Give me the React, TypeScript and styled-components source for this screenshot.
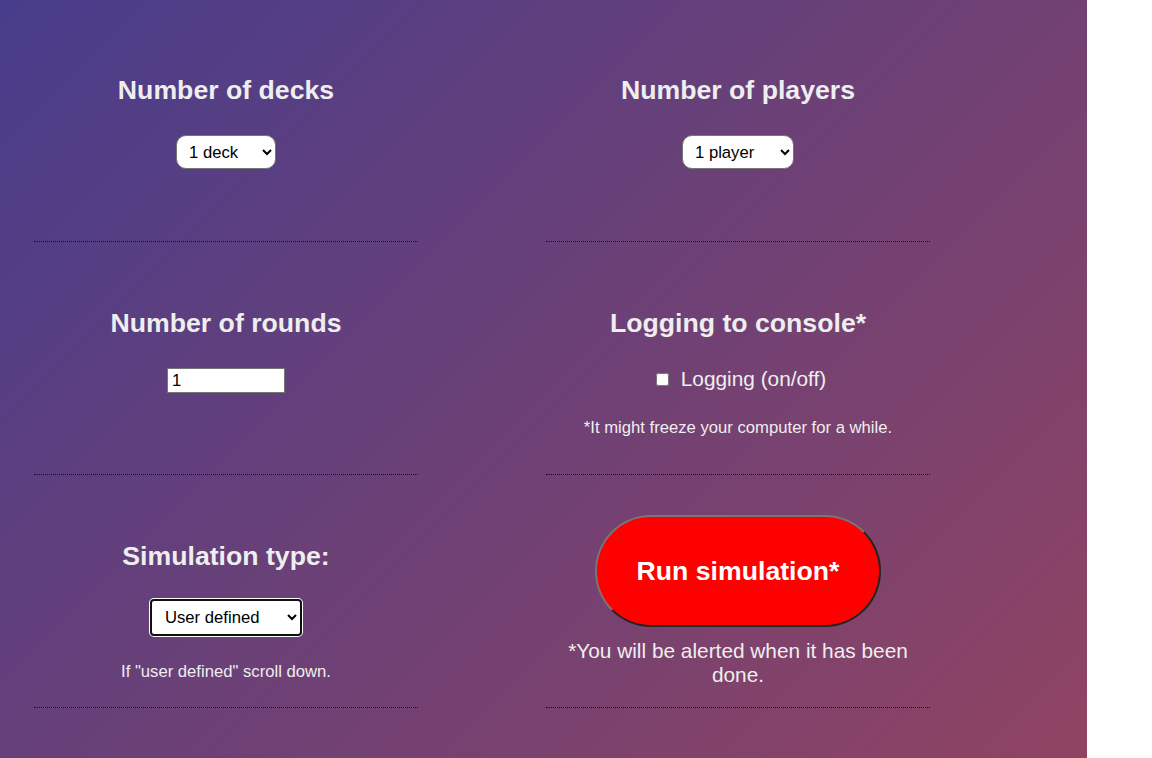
import React from 'react'
import styled, { createGlobalStyle } from 'styled-components'

const GlobalStyle = createGlobalStyle`
  html, body {
    margin: 0;
    padding: 0;
    background: #ffffff;
  }
  body {
    font-family: "Liberation Sans", Arial, sans-serif;
  }
`

const Page = styled.div`
  width: 1087px;
  min-height: 758px;
  background: linear-gradient(135deg, #483d8b 0%, #904462 100%);
  color: #eeeeee;
  overflow: hidden;
`

const Grid = styled.div`
  display: grid;
  grid-template-columns: 384px 384px;
  column-gap: 128px;
  padding: 9px 0 0 34px;
`

const Cell = styled.section<{ $top?: number }>`
  box-sizing: border-box;
  height: 233px;
  padding-top: ${(p) => p.$top ?? 66}px;
  border-bottom: 1px dotted #141014;
  display: flex;
  flex-direction: column;
  align-items: center;
  text-align: center;
`

const Heading = styled.h2`
  margin: 0 0 30px;
  font-size: 26.67px;
  line-height: 30px;
  font-weight: bold;
  color: #eeeeee;
`

const Select = styled.select<{ $w: number }>`
  width: ${(p) => p.$w}px;
  height: 34px;
  padding: 0 6px 0 8px;
  font-family: "Liberation Sans", Arial, sans-serif;
  font-size: 16.67px;
  color: #000;
  background: #fff;
  border: 1px solid #767676;
  border-radius: 10px;
`

const TypeSelect = styled.select`
  width: 152px;
  height: 37px;
  padding: 0 6px 0 9px;
  font-family: "Liberation Sans", Arial, sans-serif;
  font-size: 16.67px;
  color: #000;
  background: #fff;
  border: 2px solid #101010;
  border-radius: 4px;
  box-shadow: 0 0 0 1px #ffffff;
  margin-top: -2px;
`

const NumberInput = styled.input`
  width: 118px;
  height: 25px;
  box-sizing: border-box;
  padding: 0 4px;
  font-family: "Liberation Sans", Arial, sans-serif;
  font-size: 16.67px;
  color: #000;
  background: #fff;
  border: 1px solid #767676;
`

const CheckRow = styled.label`
  display: flex;
  align-items: center;
  gap: 12px;
  font-size: 20.83px;
  line-height: 24px;
  color: #eeeeee;
  margin-top: -1px;
`

const Box = styled.input`
  width: 13px;
  height: 13px;
  margin: 0 0 0 6px;
`

const Note = styled.p<{ $mt: number; $size?: number }>`
  margin: ${(p) => p.$mt}px 0 0;
  font-size: ${(p) => p.$size ?? 16.67}px;
  line-height: ${(p) => (p.$size ? 24 : 19)}px;
  color: #eeeeee;
  max-width: 350px;
`

const RunButton = styled.button`
  width: 286px;
  height: 112px;
  border-radius: 56px;
  border-style: solid;
  border-width: 2px;
  border-color: #767676 #232323 #232323 #767676;
  background: #ff0000;
  color: #ffffff;
  font-family: "Liberation Sans", Arial, sans-serif;
  font-size: 26.67px;
  font-weight: bold;
  cursor: pointer;
`

export default function App() {
  return (
    <>
      <GlobalStyle />
      <Page>
        <Grid>
          <Cell>
            <Heading>Number of decks</Heading>
            <Select $w={100} defaultValue="1">
              <option value="1">1 deck</option>
              <option value="2">2 decks</option>
              <option value="4">4 decks</option>
              <option value="6">6 decks</option>
              <option value="8">8 decks</option>
            </Select>
          </Cell>
          <Cell>
            <Heading>Number of players</Heading>
            <Select $w={112} defaultValue="1">
              <option value="1">1 player</option>
              <option value="2">2 players</option>
              <option value="3">3 players</option>
            </Select>
          </Cell>
          <Cell>
            <Heading>Number of rounds</Heading>
            <NumberInput type="text" defaultValue="1" />
          </Cell>
          <Cell>
            <Heading>Logging to console*</Heading>
            <CheckRow>
              <Box type="checkbox" />
              Logging (on/off)
            </CheckRow>
            <Note $mt={27}>*It might freeze your computer for a while.</Note>
          </Cell>
          <Cell>
            <Heading>Simulation type:</Heading>
            <TypeSelect defaultValue="user">
              <option value="user">User defined</option>
              <option value="basic">Basic strategy</option>
            </TypeSelect>
            <Note $mt={26}>If "user defined" scroll down.</Note>
          </Cell>
          <Cell $top={40}>
            <RunButton>Run simulation*</RunButton>
            <Note $mt={12} $size={20.83}>
              *You will be alerted when it has been done.
            </Note>
          </Cell>
        </Grid>
      </Page>
    </>
  )
}
